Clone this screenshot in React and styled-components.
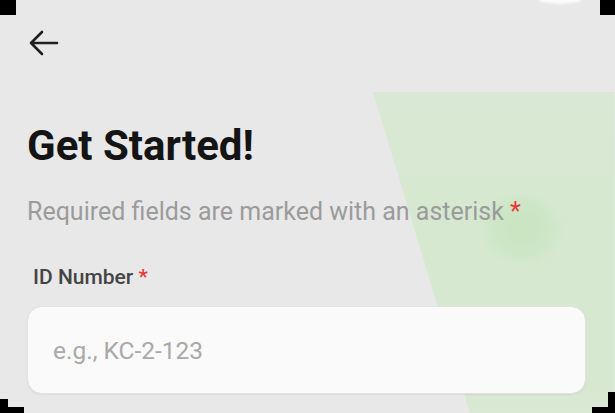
import React from "react";
import styled, { createGlobalStyle } from "styled-components";

const GlobalStyle = createGlobalStyle`
  html, body {
    margin: 0;
    padding: 0;
    background: #000;
  }
  body {
    font-family: Roboto, "Noto Sans", "Liberation Sans", sans-serif;
  }
`;

const Screen = styled.div`
  position: relative;
  width: 615px;
  height: 413px;
  overflow: hidden;
  background: #e8e8e8;
  box-sizing: border-box;
  padding: 28px 0 0 27px;
  display: flex;
  flex-direction: column;
  clip-path: polygon(
    16px 0, 600px 0, 600px 15px, 615px 15px, 615px 392px, 608px 392px,
    608px 407px, 592px 407px, 592px 413px, 24px 413px, 24px 407px,
    8px 407px, 8px 399px, 0 399px, 0 15px, 16px 15px
  );
`;

const GreenPanel = styled.div`
  position: absolute;
  inset: 0;
  background: linear-gradient(180deg, #dce8d7 0%, #d6e8d0 60%, #d8e8d2 100%);
  clip-path: polygon(373px 92px, 615px 92px, 615px 413px, 470px 413px);
  filter: blur(1px);
`;

const Blob = styled.div`
  position: absolute;
  left: 484px;
  top: 196px;
  width: 76px;
  height: 64px;
  border-radius: 45% 55% 50% 50%;
  background: radial-gradient(circle, #c9e5c1 0%, #cee6c6 55%, rgba(214, 232, 208, 0) 100%);
  filter: blur(2px);
`;

const TopGlare = styled.div`
  position: absolute;
  left: 538px;
  top: -6px;
  width: 44px;
  height: 10px;
  border-radius: 50%;
  background: rgba(255, 255, 255, 0.8);
  filter: blur(1px);
`;

const Content = styled.div`
  position: relative;
  display: flex;
  flex-direction: column;
`;

const BackButton = styled.button`
  width: 34px;
  height: 30px;
  padding: 0;
  border: none;
  background: none;
  display: flex;
  align-items: center;
  justify-content: flex-start;
  color: #1f1f1f;
`;

const Title = styled.h1`
  margin: 64px 0 0;
  font-size: 42px;
  font-weight: 700;
  line-height: 48px;
  color: #141414;
`;

const Subtitle = styled.p`
  margin: 27px 0 0;
  font-size: 25px;
  line-height: 30px;
  color: #9b9b9b;
`;

const Req = styled.span`
  color: #e53935;
`;

const Label = styled.label`
  margin: 38px 0 0 6px;
  font-size: 21px;
  font-weight: 500;
  line-height: 24px;
  color: #444;
`;

const Input = styled.input`
  margin-top: 17px;
  width: 559px;
  height: 88px;
  box-sizing: border-box;
  border: 1px solid #e2e2e2;
  border-radius: 15px;
  background: #fafafa;
  box-shadow: 0 1px 2px rgba(0, 0, 0, 0.06);
  padding: 0 25px;
  font-family: inherit;
  font-size: 24.5px;
  color: #333;
  outline: none;
  &::placeholder {
    color: #a9a9a9;
  }
`;

const ArrowLeft = () => (
  <svg width="32" height="28" viewBox="0 0 32 28" fill="none">
    <path
      d="M30 14H4M15 3L4 14l11 11"
      stroke="currentColor"
      strokeWidth="2.6"
      strokeLinecap="round"
      strokeLinejoin="round"
    />
  </svg>
);

export default function App() {
  return (
    <>
      <GlobalStyle />
      <Screen>
        <GreenPanel />
        <Blob />
        <TopGlare />
        <Content>
          <BackButton aria-label="Back">
            <ArrowLeft />
          </BackButton>
          <Title>Get Started!</Title>
          <Subtitle>
            Required fields are marked with an asterisk <Req>*</Req>
          </Subtitle>
          <Label>
            ID Number <Req>*</Req>
          </Label>
          <Input placeholder="e.g., KC-2-123" />
        </Content>
      </Screen>
    </>
  );
}
